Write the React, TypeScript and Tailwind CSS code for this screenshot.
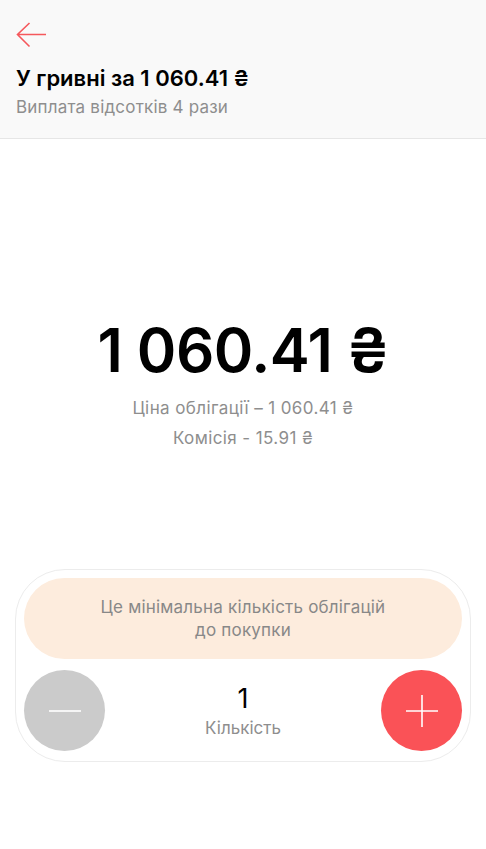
import React from "react";

export default function App() {
  const font = { fontFamily: "Inter, 'Noto Sans', sans-serif" };
  return (
    <div className="w-[486px] h-[849px] bg-white flex flex-col" style={font}>
      <div className="h-[139px] bg-[#f9f9f9] border-b border-[#e6e6e6] px-[16px] pt-[22px] flex flex-col">
        <svg width="31" height="26" viewBox="0 0 31 26" fill="none" className="block">
          <path d="M30 12.5H1.5M13.5 1L1.5 12.5L13.5 24.5" stroke="#f5585c" strokeWidth="1.6" />
        </svg>
        <div className="mt-[16px] text-[22px] leading-[28px] font-semibold text-black">
          У гривні за 1 060.41 ₴
        </div>
        <div className="mt-[4px] text-[17px] leading-[22px] tracking-[0.2px] text-[#8e8e8e]">
          Виплата відсотків 4 рази
        </div>
      </div>

      <div className="flex flex-col items-center pt-[178px]">
        <div className="text-[60px] leading-[66px] font-semibold text-black tracking-[-0.5px]">
          1 060.41 ₴
        </div>
        <div className="mt-[14px] text-[17px] leading-[22px] tracking-[0.4px] text-[#8e8e8e]">
          Ціна облігації – 1 060.41 ₴
        </div>
        <div className="mt-[8px] text-[17px] leading-[22px] tracking-[0.4px] text-[#8e8e8e]">
          Комісія - 15.91 ₴
        </div>
      </div>

      <div className="mt-[120px] mx-[15px] rounded-[50px] border border-[#ececec] pt-[8px] pb-[10px] px-[8px] flex flex-col gap-[11px]">
        <div className="h-[81px] rounded-full bg-[#fdecdd] flex items-center justify-center text-center text-[17px] leading-[23px] tracking-[0.2px] text-[#888888]">
          Це мінімальна кількість облігацій
          <br />
          до покупки
        </div>
        <div className="flex items-center justify-between">
          <div className="w-[81px] h-[81px] rounded-full bg-[#cbcbcb] flex items-center justify-center">
            <svg width="32" height="2" viewBox="0 0 32 2">
              <path d="M0 1H32" stroke="white" strokeWidth="1.6" />
            </svg>
          </div>
          <div className="flex flex-col items-center">
            <div className="text-[27px] leading-[32px] text-black">1</div>
            <div className="mt-[2px] text-[17px] leading-[22px] text-[#8e8e8e]">Кількість</div>
          </div>
          <div className="w-[81px] h-[81px] rounded-full bg-[#fa5257] flex items-center justify-center">
            <svg width="32" height="32" viewBox="0 0 32 32">
              <path d="M0 16H32M16 0V32" stroke="white" strokeWidth="1.6" />
            </svg>
          </div>
        </div>
      </div>
    </div>
  );
}
